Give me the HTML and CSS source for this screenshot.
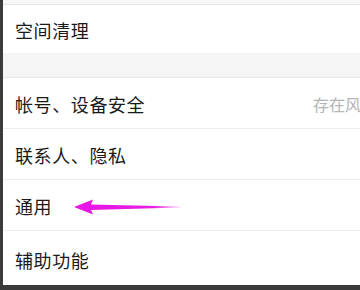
FILE: index.html
```html
<!DOCTYPE html>
<html lang="zh">
<head>
<meta charset="utf-8">
<link rel="stylesheet" href="styles.css">
</head>
<body>
<div class="screen">
  <div class="topbar"></div>
  <div class="row first"><span class="label">空间清理</span></div>
  <div class="gap"></div>
  <div class="row"><span class="label">帐号、设备安全</span><span class="hint">存在风险</span></div>
  <div class="row"><span class="label">联系人、隐私</span></div>
  <div class="row arrow-row"><span class="label">通用</span>
    <svg class="arrow" width="110" height="18" viewBox="0 0 110 18">
      <defs>
        <linearGradient id="fade" x1="0" x2="1" y1="0" y2="0">
          <stop offset="0" stop-color="#e815e6"/>
          <stop offset="0.75" stop-color="#e51fe3"/>
          <stop offset="1" stop-color="#e84fe6" stop-opacity="0.3"/>
        </linearGradient>
      </defs>
      <polygon points="0,9 19,1.5 17,6.5 106,8.5 106,9.5 17,12 19,16.5" fill="url(#fade)"/>
    </svg>
  </div>
  <div class="row last"><span class="label">辅助功能</span></div>
</div>
<div class="bottom"></div>
</body>
</html>
```
FILE: styles.css
```css
html, body {
  margin: 0;
  padding: 0;
  background: #ffffff;
}
body {
  width: 360px;
  height: 290px;
  overflow: hidden;
  font-family: "Noto Sans CJK SC", "Noto Sans", sans-serif;
}
.screen {
  border-left: 3px solid #3b3b3b;
  height: 285px;
  background: #ffffff;
  display: flex;
  flex-direction: column;
  overflow: hidden;
}
.bottom {
  height: 5px;
  background: #3b3b3b;
}
.topbar {
  height: 4px;
  flex: none;
  background: #f7f7f7;
  border-bottom: 1px solid #e4e4e4;
}
.row {
  flex: none;
  display: flex;
  align-items: center;
  justify-content: space-between;
  padding: 2px 0 0 12px;
  box-sizing: border-box;
  height: 51px;
  border-bottom: 1px solid #ededed;
  position: relative;
}
.row.first {
  height: 48px;
  border-bottom: none;
  padding-top: 2px;
}
.row.last {
  flex: 1;
  border-bottom: none;
  padding-top: 4px;
}
.gap {
  flex: none;
  height: 24px;
  background: #f5f5f5;
  border-bottom: 1px solid #e9e9e9;
}
.label {
  font-size: 18px;
  color: #1a1a1a;
  letter-spacing: 0.6px;
}
.hint {
  font-size: 16px;
  color: #b4b4b4;
  white-space: nowrap;
  margin-right: -17px;
}
.arrow {
  position: absolute;
  left: 71px;
  top: 18px;
}
```
